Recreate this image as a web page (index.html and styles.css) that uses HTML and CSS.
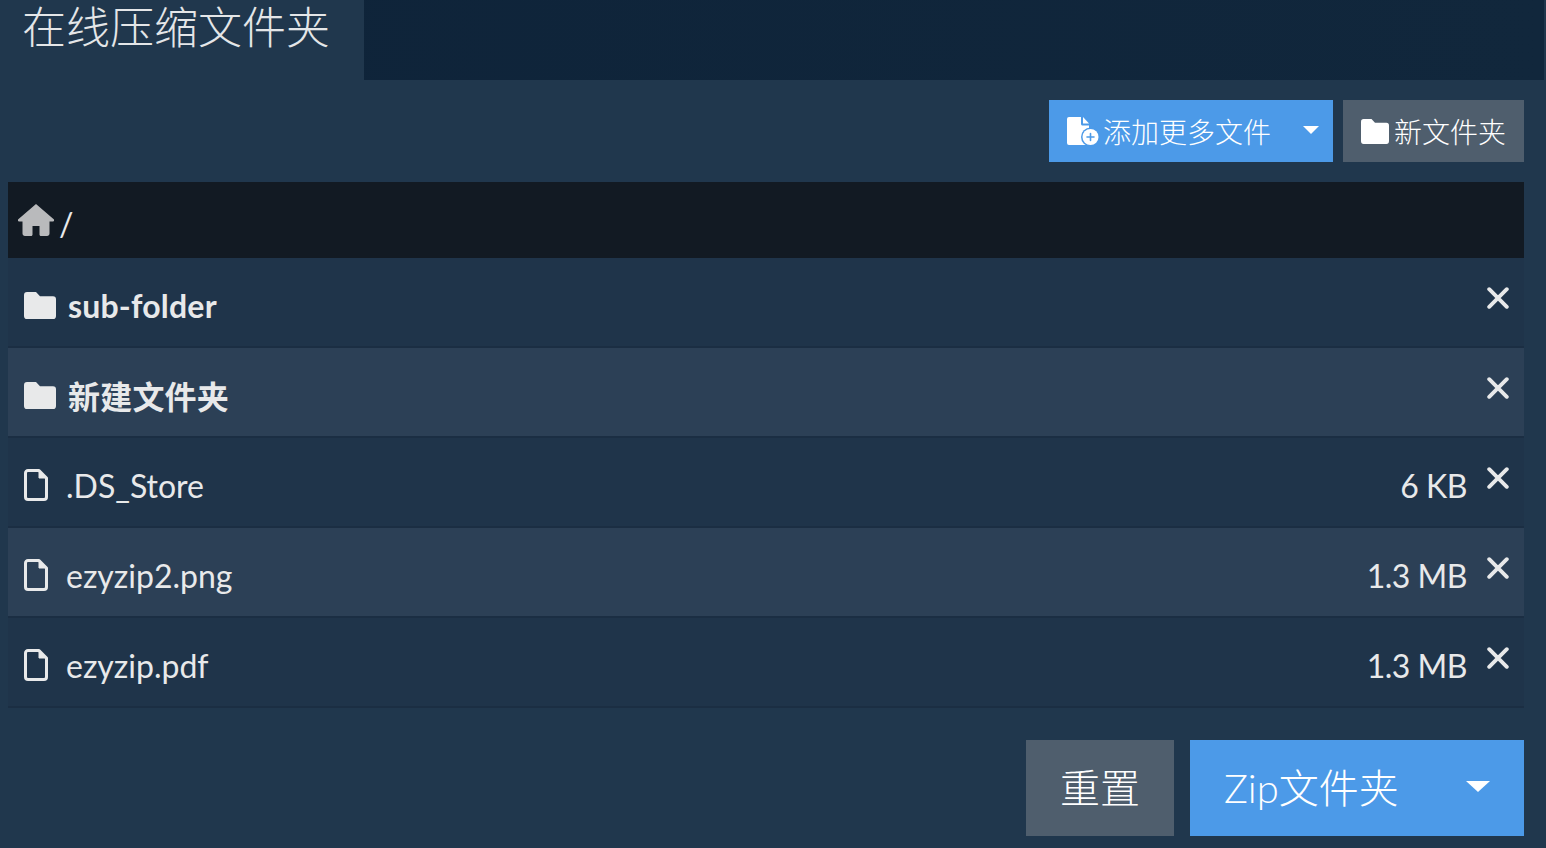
FILE: index.html
```html
<!DOCTYPE html>
<html lang="zh-CN">
<head>
  <meta charset="UTF-8" />
  <title>在线压缩文件夹</title>
  <link rel="stylesheet" href="styles.css">
</head>
<body>

  <div class="tabs">
    <div class="tab active">在线压缩文件夹</div>
  </div>

  <div class="panel">
    <div class="toolbar">
      <button class="btn btn-blue btn-add">
        <svg class="icon-add" viewBox="0 0 32 28"><path fill="#fff" d="M2 0h12v7c0 .8.700 1.500 1.500 1.500H22V28H2a2 2 0 0 1-2-2V2a2 2 0 0 1 2-2z"/><path fill="#fff" d="M16 0l6 6.500h-6z"/><circle cx="23.500" cy="20" r="9.500" fill="#4c9ae8"/><circle cx="23.500" cy="20" r="8" fill="#fff"/><path stroke="#4c9ae8" stroke-width="1.600" stroke-linecap="round" d="M23.500 16.500v7M20 20h7"/></svg>
        <span class="btn-label">添加更多文件</span>
        <span class="caret"></span>
      </button>
      <button class="btn btn-gray btn-folder">
        <svg class="icon-folder" viewBox="0 0 32 26" preserveAspectRatio="none"><path d="M3 0h9l4 4h13a3 3 0 0 1 3 3v16a3 3 0 0 1-3 3H3a3 3 0 0 1-3-3V3a3 3 0 0 1 3-3z"/></svg>
        <span>新文件夹</span>
      </button>
    </div>

    <div class="pathbar">
      <svg class="icon-home" viewBox="0 0 36 32"><path fill="#b9babc" d="M18 0L0 15.500c-.6.600-.3 2 1 2h3.500v12c0 1.400 1 2.500 2.500 2.500h6c1 0 1.500-.7 1.500-1.500V22h7v8.500c0 .8.500 1.500 1.500 1.500h6c1.500 0 2.500-1.100 2.500-2.500v-12H35c1.300 0 1.600-1.400 1-2z"/></svg>
      <span class="slash">/</span>
    </div>

    <div class="rows">
      <div class="row folder">
        <svg class="icon-folder" viewBox="0 0 32 26" preserveAspectRatio="none"><path d="M3 0h9l4 4h13a3 3 0 0 1 3 3v16a3 3 0 0 1-3 3H3a3 3 0 0 1-3-3V3a3 3 0 0 1 3-3z"/></svg>
        <span class="name">sub-folder</span>
        <span class="close">
          <svg viewBox="0 0 20 20"><path d="M2 2l16 16M18 2L2 18"/></svg>
        </span>
      </div>
      <div class="row folder alt">
        <svg class="icon-folder" viewBox="0 0 32 26" preserveAspectRatio="none"><path d="M3 0h9l4 4h13a3 3 0 0 1 3 3v16a3 3 0 0 1-3 3H3a3 3 0 0 1-3-3V3a3 3 0 0 1 3-3z"/></svg>
        <span class="name">新建文件夹</span>
        <span class="close">
          <svg viewBox="0 0 20 20"><path d="M2 2l16 16M18 2L2 18"/></svg>
        </span>
      </div>
      <div class="row">
        <svg class="icon-file" viewBox="0 0 24 32"><path d="M4 1.500h11L22.500 9v19a2.500 2.500 0 0 1-2.500 2.500H4A2.500 2.500 0 0 1 1.500 28V4A2.500 2.500 0 0 1 4 1.500z"/><path class="fold" d="M15 1.500V9h7.500z"/></svg>
        <span class="name">.DS_Store</span>
        <span class="size">6 KB</span>
        <span class="close">
          <svg viewBox="0 0 20 20"><path d="M2 2l16 16M18 2L2 18"/></svg>
        </span>
      </div>
      <div class="row alt">
        <svg class="icon-file" viewBox="0 0 24 32"><path d="M4 1.500h11L22.500 9v19a2.500 2.500 0 0 1-2.500 2.500H4A2.500 2.500 0 0 1 1.500 28V4A2.500 2.500 0 0 1 4 1.500z"/><path class="fold" d="M15 1.500V9h7.500z"/></svg>
        <span class="name">ezyzip2.png</span>
        <span class="size">1.3 MB</span>
        <span class="close">
          <svg viewBox="0 0 20 20"><path d="M2 2l16 16M18 2L2 18"/></svg>
        </span>
      </div>
      <div class="row">
        <svg class="icon-file" viewBox="0 0 24 32"><path d="M4 1.500h11L22.500 9v19a2.500 2.500 0 0 1-2.500 2.500H4A2.500 2.500 0 0 1 1.500 28V4A2.500 2.500 0 0 1 4 1.500z"/><path class="fold" d="M15 1.500V9h7.500z"/></svg>
        <span class="name">ezyzip.pdf</span>
        <span class="size">1.3 MB</span>
        <span class="close">
          <svg viewBox="0 0 20 20"><path d="M2 2l16 16M18 2L2 18"/></svg>
        </span>
      </div>
    </div>

    <div class="actions">
      <button class="btn btn-gray btn-reset">重置</button>
      <button class="btn btn-blue btn-zip">
        <span>Zip文件夹</span>
        <span class="caret big"></span>
      </button>
    </div>
  </div>

</body>
</html>
```

FILE: styles.css
```css
body {
  margin: 0;
  height: 848px;
  overflow: hidden;
  background-color: #20374d;
  color: #e8e9ea;
  font-family: Lato, "Noto Sans CJK SC", sans-serif;
}
.tabs {
  display: flex;
  height: 80px;
  margin-right: 2px;
  background: linear-gradient(to right, #0e2339, #11273c);
}
.tab {
  box-sizing: border-box;
  width: 364px;
  height: 80px;
  padding-left: 22px;
  background-color: #20374d;
  font-size: 44px;
  font-weight: 300;
  line-height: 54px;
  color: #e4e6e8;
}
.panel {
  padding: 20px 22px 0 8px;
}
.toolbar {
  display: flex;
  justify-content: flex-end;
  gap: 10px;
  height: 62px;
}
.btn {
  display: flex;
  align-items: center;
  border: none;
  color: #fff;
  font-family: inherit;
  font-weight: 300;
  cursor: pointer;
}
.btn-blue {
  background-color: #4c9ae8;
}
.btn-gray {
  background-color: #4f5e6d;
}
.btn-add {
  width: 284px;
  padding: 0 14px 0 18px;
  font-size: 28px;
}
.icon-add {
  width: 32px;
  height: 28px;
  margin-right: 4px;
  overflow: visible;
}
.btn-label {
  flex: 1;
  text-align: left;
}
.caret {
  width: 0;
  height: 0;
  border-left: 8px solid transparent;
  border-right: 8px solid transparent;
  border-top: 8px solid #fff;
  margin-top: -2px;
}
.caret.big {
  border-left-width: 12px;
  border-right-width: 12px;
  border-top-width: 11px;
  margin-top: 0;
}
.btn-folder {
  width: 181px;
  padding: 0 0 0 18px;
  gap: 5px;
  font-size: 28px;
}
.btn-folder .icon-folder {
  width: 28px;
  height: 25px;
  fill: #fff;
}
.pathbar {
  display: flex;
  align-items: center;
  height: 76px;
  margin-top: 20px;
  padding-left: 10px;
  box-sizing: border-box;
  background-color: #121a23;
}
.icon-home {
  width: 36px;
  height: 32px;
}
.slash {
  margin: 7px 0 0 5px;
  font-size: 32px;
  color: #e8e9ea;
}
.rows {
  display: flex;
  flex-direction: column;
}
.row {
  display: flex;
  align-items: center;
  box-sizing: border-box;
  height: 90px;
  padding: 6px 15px 0 16px;
  background-color: #1f344a;
  border-bottom: 2px solid #1b2e43;
  font-size: 32px;
}
.row.alt {
  background-color: #2c4056;
}
.row .icon-folder {
  width: 32px;
  height: 27px;
  margin-right: 12px;
  fill: #e8e9ea;
}
.row.folder .name {
  font-weight: 700;
  letter-spacing: 0.2px;
}
.icon-file {
  width: 24px;
  height: 32px;
  margin-right: 18px;
  fill: none;
  stroke: #e8e9ea;
  stroke-width: 3;
  stroke-linejoin: round;
}
.icon-file .fold {
  fill: #e8e9ea;
  stroke-width: 1;
}
.name {
  flex: 1;
}
.size {
  margin-right: 20px;
  letter-spacing: -0.5px;
}
.close {
  display: flex;
  margin-top: -15px;
}
.close svg {
  width: 22px;
  height: 22px;
  fill: none;
  stroke: #e8e9ea;
  stroke-width: 3.500;
  stroke-linecap: round;
}
.actions {
  display: flex;
  justify-content: flex-end;
  gap: 16px;
  margin-top: 32px;
}
.btn-reset {
  justify-content: center;
  width: 148px;
  height: 96px;
  padding: 0 0 4px;
  font-size: 40px;
}
.btn-zip {
  justify-content: space-between;
  width: 334px;
  height: 96px;
  padding: 0 34px 4px;
  font-size: 40px;
}
```
